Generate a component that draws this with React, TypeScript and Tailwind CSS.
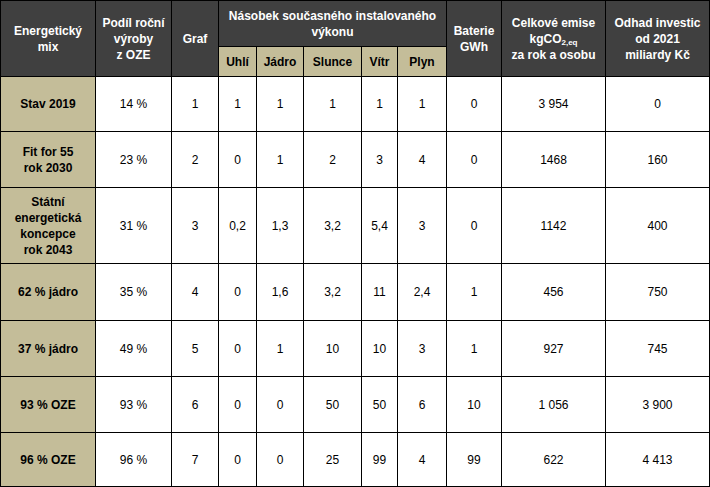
import type { FC, ReactNode } from 'react';

interface Row {
    name: ReactNode;
    share: string;
    graf: string;
    mult: string[];
    bat: string;
    emise: string;
    invest: string;
    h: string;
}

const rows: Row[] = [
    { name: 'Stav 2019', share: '14 %', graf: '1', mult: ['1', '1', '1', '1', '1'], bat: '0', emise: '3 954', invest: '0', h: 'h-[55px]' },
    { name: <>Fit for 55<br />rok 2030</>, share: '23 %', graf: '2', mult: ['0', '1', '2', '3', '4'], bat: '0', emise: '1468', invest: '160', h: 'h-[56px]' },
    { name: <>Státní<br />energetická<br />koncepce<br />rok 2043</>, share: '31 %', graf: '3', mult: ['0,2', '1,3', '3,2', '5,4', '3'], bat: '0', emise: '1142', invest: '400', h: 'h-[76px]' },
    { name: '62 % jádro', share: '35 %', graf: '4', mult: ['0', '1,6', '3,2', '11', '2,4'], bat: '1', emise: '456', invest: '750', h: 'h-[57px]' },
    { name: '37 % jádro', share: '49 %', graf: '5', mult: ['0', '1', '10', '10', '3'], bat: '1', emise: '927', invest: '745', h: 'h-[56px]' },
    { name: '93 % OZE', share: '93 %', graf: '6', mult: ['0', '0', '50', '50', '6'], bat: '10', emise: '1 056', invest: '3 900', h: 'h-[56px]' },
    { name: '96 % OZE', share: '96 %', graf: '7', mult: ['0', '0', '25', '99', '4'], bat: '99', emise: '622', invest: '4 413', h: 'h-[54px]' },
];

const widths = ['w-[95px]', 'w-[76px]', 'w-[47px]', 'w-[38px]', 'w-[47px]', 'w-[58px]', 'w-[36px]', 'w-[49px]', 'w-[55px]', 'w-[104px]', 'w-[104px]'];

const th = 'border border-black bg-[#404040] text-white font-bold px-1 text-center align-middle leading-[16px]';
const sub = 'border border-black bg-[#c4bd99] text-black font-bold px-1 text-center align-middle';
const td = 'border border-black bg-white text-black px-1 text-center align-middle';

const App: FC = () => {
    return (
        <div className="w-[710px] h-[487px] bg-white overflow-hidden">
            <table className="table-fixed border-collapse w-[710px] text-[12px] font-['Liberation_Sans',Arial,sans-serif]">
                <colgroup>
                    {widths.map((w, i) => <col key={i} className={w} />)}
                </colgroup>
                <thead>
                    <tr className="h-[46px]">
                        <th rowSpan={2} className={th}>Energetický<br />mix</th>
                        <th rowSpan={2} className={th}>Podíl roční<br />výroby<br />z OZE</th>
                        <th rowSpan={2} className={th}>Graf</th>
                        <th colSpan={5} className={th}>Násobek současného instalovaného<br />výkonu</th>
                        <th rowSpan={2} className={th}>Baterie<br />GWh</th>
                        <th rowSpan={2} className={th}>
                            Celkové emise<br />
                            kgCO<sub className="text-[8px]">2,eq</sub><br />
                            za rok a osobu
                        </th>
                        <th rowSpan={2} className={th}>Odhad investic<br />od 2021<br />miliardy Kč</th>
                    </tr>
                    <tr className="h-[30px]">
                        <th className={sub}>Uhlí</th>
                        <th className={sub}>Jádro</th>
                        <th className={sub}>Slunce</th>
                        <th className={sub}>Vítr</th>
                        <th className={sub}>Plyn</th>
                    </tr>
                </thead>
                <tbody>
                    {rows.map((r, i) => (
                        <tr key={i} className={r.h}>
                            <td className={`${sub} leading-[16px]`}>{r.name}</td>
                            <td className={td}>{r.share}</td>
                            <td className={td}>{r.graf}</td>
                            {r.mult.map((m, j) => <td key={j} className={td}>{m}</td>)}
                            <td className={td}>{r.bat}</td>
                            <td className={td}>{r.emise}</td>
                            <td className={td}>{r.invest}</td>
                        </tr>
                    ))}
                </tbody>
            </table>
        </div>
    );
};

export default App;
